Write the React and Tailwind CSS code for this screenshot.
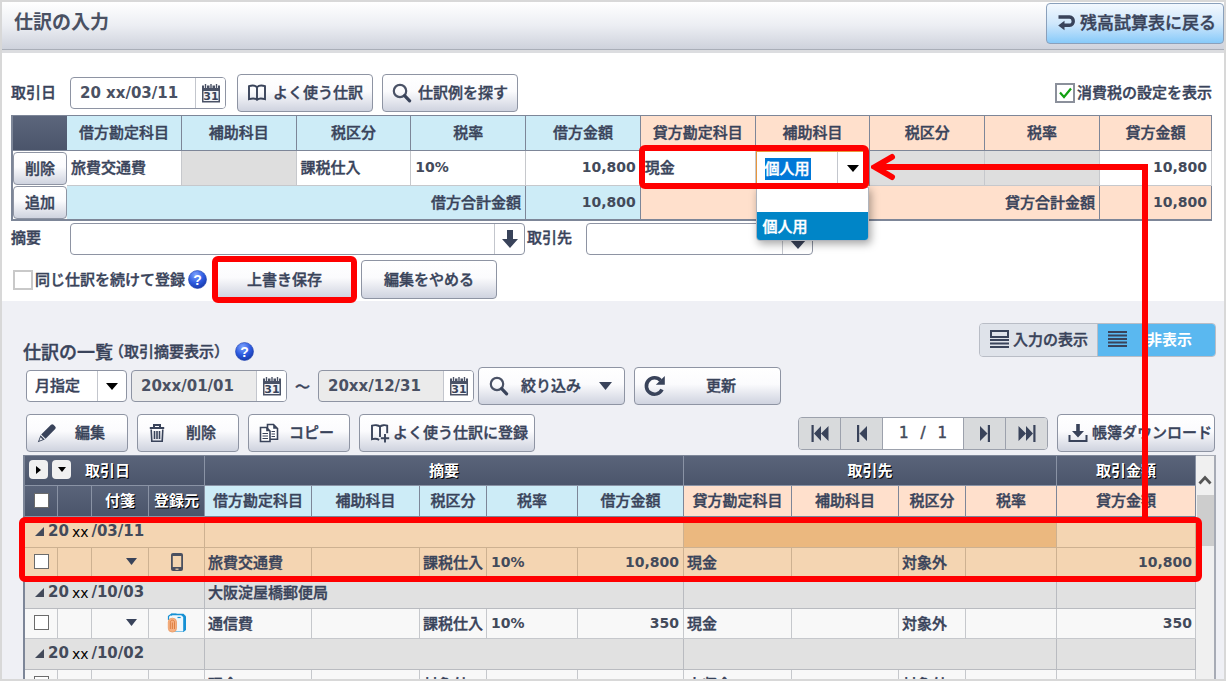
import React from "react";

const BTN =
  "flex items-center rounded border border-[#8e94a3] bg-linear-to-b from-white via-[#fbfbfd] via-45% to-[#cfd3df] pb-0.5 font-medium whitespace-nowrap text-[#39435a] [&>svg]:mt-0.5";
const NUM = "font-['DejaVu_Sans','Noto_Sans_CJK_JP',sans-serif] text-sm font-bold text-[#434a5a] [-webkit-text-stroke:0px]";

function Calendar() {
  return (
    <svg width="20" height="20" viewBox="0 0 20 20" className="[-webkit-text-stroke:0px]" aria-hidden="true">
      <path d="M1 2.500h18v17H1z" fill="#4a5266" />
      <path d="M2.500 8h15v10h-15z" fill="#f2f3f6" />
      <path d="M4.500 0v5M10 0v5M15.500 0v5" stroke="#fff" strokeWidth="3" />
      <path d="M4.500 1v4M10 1v4M15.500 1v4" stroke="#4a5266" strokeWidth="1.400" />
      <text x="10" y="17.200" textAnchor="middle" className="font-['DejaVu_Sans',sans-serif] font-bold" fontSize="11" fill="#39435a">31</text>
    </svg>
  );
}

function Search() {
  return (
    <svg width="20" height="20" viewBox="0 0 20 20" fill="none" aria-hidden="true">
      <circle cx="8" cy="8" r="6.2" stroke="#4a5266" strokeWidth="2.2" />
      <path d="M12.6 12.6 17.6 17.8" stroke="#39435a" strokeWidth="3.2" strokeLinecap="round" />
    </svg>
  );
}

function Book({ plus }) {
  return (
    <svg width="20" height="20" viewBox="0 0 20 20" fill="none" stroke="#39435a" strokeWidth="1.9" aria-hidden="true">
      {plus ? (
        <path d="M10 14V3.6C8.6 2 4.6 1.800 2 2.600v13.600c2.300-.7 5-.6 7.200.6M10 3.600c1.400-1.600 5-1.800 7.200-1v7.600M15 11v8.500M10.800 15.200h8.400" />
      ) : (
        <path d="M10 16.600V4.200C8.400 2.600 4.600 2.400 2 3.200v13c2.600-.8 6.400-.9 8 .6 1.600-1.500 5.400-1.400 8-.6v-13c-2.600-.8-6.400-.6-8 1" />
      )}
    </svg>
  );
}

function Pencil() {
  return (
    <svg width="20" height="20" viewBox="0 0 20 20" fill="#39435a" aria-hidden="true">
      <path d="M14 1.800a1.800 1.800 0 0 1 2.500 0l1.700 1.700a1.800 1.800 0 0 1 0 2.500L8.600 15.800l-4.400-4.400zM3.500 12.200l4.300 4.300L.8 19.200z" />
      <path d="M3.600 14.300 2.300 17.700l3.400-1.300z" fill="#e8eaf0" />
    </svg>
  );
}

function Trash() {
  return (
    <svg width="18" height="20" viewBox="0 0 18 20" fill="none" stroke="#39435a" strokeWidth="1.6" aria-hidden="true">
      <path d="M6 4.500V2h6v2.500M1.800 5h14.400" strokeWidth="2" />
      <path d="M3.200 6.500l.6 11.700h10.400l.6-11.700M6.500 8v8M9 8v8M11.500 8v8" />
    </svg>
  );
}

function Copy() {
  return (
    <svg width="20" height="20" viewBox="0 0 20 20" aria-hidden="true">
      <path d="M8.500 1.500h6l4 4v10.700h-10z" fill="#fff" stroke="#39435a" strokeWidth="1.600" />
      <path d="M14.200 1.500v4.200h4.300z" fill="#39435a" />
      <path d="M1.500 4.500h6l3.500 3.500v10.500H1.500z" fill="#fff" stroke="#39435a" strokeWidth="1.600" />
      <path d="M7.200 4.500v3.800H11z" fill="#39435a" />
      <path d="M3.500 10.500h5.500M3.500 13h5.500M3.500 15.500h5.500M12.500 8.500H16M12.500 11H16M12.500 13.500H16" stroke="#39435a" strokeWidth="1.200" />
    </svg>
  );
}

function Refresh() {
  return (
    <svg width="24" height="24" viewBox="0 0 24 24" fill="none" aria-hidden="true">
      <path d="M19 15.500A8.200 8.200 0 1 1 17.600 6.400" stroke="#39435a" strokeWidth="3.600" />
      <path d="M21.800 2v8.800h-9z" fill="#39435a" />
    </svg>
  );
}

function Download() {
  return (
    <svg width="20" height="20" viewBox="0 0 20 20" aria-hidden="true">
      <path d="M1.500 12v6h17v-6" fill="none" stroke="#39435a" strokeWidth="2" />
      <path d="M8.200 1h3.600v7H16l-6 6.500L4 8h4.200z" fill="#39435a" />
    </svg>
  );
}

function Return() {
  return (
    <svg width="20" height="20" viewBox="0 0 20 20" aria-hidden="true">
      <path d="M1.500 5h11c5 0 5 8.300 0 8.300H6" fill="none" stroke="#39435a" strokeWidth="3.400" />
      <path d="M7.500 8.800v9.400L1.200 13.400z" fill="#39435a" />
    </svg>
  );
}

function Down() {
  return (
    <svg width="12" height="7" viewBox="0 0 12 7" aria-hidden="true"><path d="M0 0h12L6 7z" fill="#000" /></svg>
  );
}

function Help() {
  return (
    <button type="button" aria-label="ヘルプ" className="shrink-0 [-webkit-text-stroke:0px]">
      <svg width="19" height="19" viewBox="0 0 19 19">
        <defs>
          <radialGradient id="help-ball" cx="40%" cy="25%" r="80%">
            <stop offset="0" stopColor="#7fa4ff" />
            <stop offset="0.550" stopColor="#2d5be0" />
            <stop offset="1" stopColor="#1637a6" />
          </radialGradient>
        </defs>
        <circle cx="9.500" cy="9.500" r="9" fill="url(#help-ball)" stroke="#1d3fae" strokeWidth=".6" />
        <text x="9.500" y="14.500" textAnchor="middle" fontSize="14" className="font-['Liberation_Sans',sans-serif] font-bold" fill="#fff">?</text>
      </svg>
    </button>
  );
}

function Skip({ back, double }) {
  return (
    <svg width="20" height="17" viewBox="0 0 20 17" fill="#39435a" aria-hidden="true">
      {back && double && <path d="M1.500 0h2.200v17H1.500zM11 1v15L4 8.500zM18.500 1v15l-7.500-7.500z" />}
      {back && !double && <path d="M5 0h2.200v17H5zM15 1v15L7.500 8.500z" />}
      {!back && !double && <path d="M12.800 0H15v17h-2.200zM5 1v15l7.500-7.500z" />}
      {!back && double && <path d="M16.300 0h2.200v17h-2.200zM9 1v15l7-7.500zM1.500 1v15L9 8.500z" />}
    </svg>
  );
}

function DateBox({ label, value, readOnly }) {
  return (
    <div className={`flex h-8 w-[156px] overflow-hidden rounded border border-[#8e94a3] ${readOnly ? "bg-[#ebebeb]" : "bg-white"}`}>
      <input
        aria-label={label}
        defaultValue={value}
        readOnly={readOnly}
        className="w-0 flex-1 bg-transparent pl-[9px] font-['DejaVu_Sans',sans-serif] text-[15px] font-bold text-[#4a5163] outline-none [-webkit-text-stroke:0px]"
      />
      <button type="button" aria-label="カレンダー" className="flex w-[30px] items-center justify-center border-l border-[#c3c6cd] bg-white">
        <Calendar />
      </button>
    </div>
  );
}

function Tick({ id, checked, className }) {
  return (
    <span className="relative flex shrink-0">
      <input id={id} type="checkbox" defaultChecked={checked} className={`peer appearance-none bg-white ${className}`} />
      <svg viewBox="0 0 20 20" className="pointer-events-none absolute inset-0 hidden h-full w-full peer-checked:block">
        <path d="M5 9.500l4 4.500 7-8.500" fill="none" stroke="#12a012" strokeWidth="2.200" />
      </svg>
    </span>
  );
}

const ROW_TICK = "h-[15px] w-[15px] border border-[#6b6b6b]";
const HEAD = "border-b border-r border-[#7d8698] p-0 pb-0.5 text-center font-medium";
const CELL = "border-b border-r border-[#c6c8cc] pb-0.5";

function EntryTable() {
  const names = ["勘定科目", "補助科目", "税区分", "税率", "金額"];
  const title = (side, n) => (n === "勘定科目" || n === "金額" ? side + n : n);
  const total = "border-r border-b-2 border-[#7d8698] pr-1 pb-0.5 text-right";
  return (
    <table className="mt-[3px] w-full table-fixed border-separate border-spacing-0 border-l-2 border-t border-[#7d8698]">
      <colgroup>
        <col className="w-[54px]" />
        {Array.from({ length: 9 }, (_, i) => <col key={i} />)}
        <col className="w-[112px]" />
      </colgroup>
      <thead>
        <tr className="h-[35px]">
          <th className="border-b border-[#7d8698] bg-linear-to-b from-[#5c667c] to-[#4b556b]" aria-label="操作" />
          {names.map((n) => <th key={n} className={`${HEAD} bg-[#cdecf7]`}>{title("借方", n)}</th>)}
          {names.map((n) => <th key={n} className={`${HEAD} bg-[#ffe0cc]`}>{title("貸方", n)}</th>)}
        </tr>
      </thead>
      <tbody>
        <tr className="h-[35px] bg-white">
          <td className="p-0"><button type="button" className={`${BTN} h-[33px] w-[54px] justify-center`}>削除</button></td>
          <td className={`${CELL} pl-1`}>旅費交通費</td>
          <td className={`${CELL} bg-[#dedede]`} />
          <td className={`${CELL} pl-1`}>課税仕入</td>
          <td className={`${CELL} pl-1 ${NUM}`}>10%</td>
          <td className={`${CELL} pr-1 text-right ${NUM}`}>10,800</td>
          <td className={`${CELL} relative pl-1`}>
            現金
            <span className="pointer-events-none absolute -top-1.5 -left-0.5 z-20 h-[44px] w-[calc(200%+3px)] rounded-md border-6 border-[#ff0000]" />
          </td>
          <td className="relative border-r border-[#7d8698] p-0">
            <div className="flex h-[35px] items-center border border-[#e8963c]">
              <div className="flex-1 pl-2">
                <input aria-label="補助科目" defaultValue="個人用" className="h-[22px] w-[46px] bg-[#0078d7] pb-0.5 text-white outline-none" />
              </div>
              <button type="button" aria-label="候補を開く" className="flex h-full w-[31px] items-center justify-center border-l border-[#c3c6cd]"><Down /></button>
            </div>
            <ul role="listbox" className="absolute top-[36px] left-0 z-10 w-full overflow-hidden rounded-b border border-[#b0b4bc] bg-white shadow-[2px_3px_8px_rgba(0,0,0,0.350)]">
              <li role="option" aria-selected="false" className="h-6" />
              <li role="option" aria-selected="true" className="flex h-7 items-center bg-[#0085c7] pl-1.5 text-white">個人用</li>
            </ul>
          </td>
          <td className={`${CELL} bg-[#dedede]`} />
          <td className={`${CELL} bg-[#dedede]`} />
          <td className={`${CELL} pr-1 text-right ${NUM}`}>10,800</td>
        </tr>
        <tr className="h-[35px]">
          <td className="border-b-2 border-[#7d8698] bg-white p-0"><button type="button" className={`${BTN} h-[33px] w-[54px] justify-center`}>追加</button></td>
          <td colSpan={4} className={`${total} bg-[#cdecf7]`}>借方合計金額</td>
          <td className={`${total} bg-[#cdecf7] ${NUM}`}>10,800</td>
          <td colSpan={4} className={`${total} bg-[#ffe0cc]`}>貸方合計金額</td>
          <td className={`${total} bg-[#ffe0cc] ${NUM}`}>10,800</td>
        </tr>
      </tbody>
    </table>
  );
}

const entries = [
  { date: "/03/11", memo: "", source: "phone", debit: "旅費交通費", tax: "課税仕入", rate: "10%", amount: "10,800", credit: "現金", creditTax: "対象外", active: true },
  { date: "/10/03", memo: "大阪淀屋橋郵便局", source: "card", debit: "通信費", tax: "課税仕入", rate: "10%", amount: "350", credit: "現金", creditTax: "対象外" },
  { date: "/10/02", memo: "", source: "", debit: "現金", tax: "対象外", rate: "", amount: "10,100", credit: "未収金", creditTax: "対象外" },
];

function Source({ kind }) {
  if (kind === "phone")
    return (
      <svg width="14" height="20" viewBox="0 0 14 20" className="mx-auto" role="img" aria-label="スマートフォン">
        <rect x="1" y="1" width="12" height="18" rx="2" fill="#4a5060" />
        <rect x="2.800" y="4" width="8.400" height="11" fill="#f4d5b0" />
        <path d="M5.500 17.200h3" stroke="#f4d5b0" strokeWidth="1.200" />
      </svg>
    );
  if (kind === "card")
    return (
      <svg width="20" height="20" viewBox="0 0 20 20" className="mx-auto" role="img" aria-label="明細">
        <path d="M4 .8h12.500l2.500 2.500V17l-2.500 2H4z" fill="#1590d4" />
        <path d="M2.500 3.500 5.500 2.200h8.700l2 1.800v14.500H2.500z" fill="#eef7fc" />
        <path d="M1.500 7V3.200L4.500 1.200h5" fill="none" stroke="#1590d4" strokeWidth="1.200" />
        <path d="M10.500 4.500h3.200" stroke="#1590d4" strokeWidth="1.200" />
        <rect x="1.300" y="5.200" width="8.200" height="13.800" rx="3.800" fill="#f5b184" stroke="#ee9a62" strokeWidth=".8" />
        <path d="M3.300 16V9.200c0-2.800 4.200-2.800 4.200 0V16M5.400 9.500V16" fill="none" stroke="#d9793a" strokeWidth=".9" />
      </svg>
    );
  return null;
}

function ListTable() {
  const dark = "border-r border-b border-[#8a93a5] bg-linear-to-b from-[#5a647a] to-[#4b556b] p-0 pb-0.5 text-center font-bold text-white [text-shadow:1px_1px_0_#000] [-webkit-text-stroke:0px]";
  return (
    <table className="w-full table-fixed border-separate border-spacing-0 border-t border-l-2 border-[#7d8698]">
      <colgroup>
        <col className="w-[33px]" /><col className="w-[34px]" /><col className="w-[57px]" /><col className="w-[56px]" />
        <col className="w-[107px]" /><col className="w-[108px]" /><col className="w-[67px]" /><col className="w-[91px]" /><col className="w-[106px]" />
        <col className="w-[108px]" /><col className="w-[107px]" /><col className="w-[67px]" /><col className="w-[91px]" /><col />
      </colgroup>
      <thead>
        <tr className="h-[30px]">
          <th colSpan={4} className={dark}>
            <div className="flex items-center gap-1 pl-1">
              <button type="button" aria-label="すべて閉じる" className="flex h-[19px] w-[19px] items-center justify-center rounded-sm bg-[#f0f0f0]">
                <svg width="5" height="8" viewBox="0 0 5 8"><path d="M0 0v8l5-4z" /></svg>
              </button>
              <button type="button" aria-label="すべて開く" className="flex h-[19px] w-[19px] items-center justify-center rounded-sm bg-[#f0f0f0]">
                <svg width="8" height="5" viewBox="0 0 8 5"><path d="M0 0h8L4 5z" /></svg>
              </button>
              <span className="pl-2.5">取引日</span>
            </div>
          </th>
          <th colSpan={5} className={dark}>摘要</th>
          <th colSpan={4} className={dark}>取引先</th>
          <th className={dark}>取引金額</th>
        </tr>
        <tr className="h-[31px]">
          <th className={dark}><input type="checkbox" aria-label="すべて選択" className={`mx-auto block appearance-none bg-white ${ROW_TICK}`} /></th>
          <th className={dark} aria-label="番号" />
          <th className={dark}>付箋</th>
          <th className={dark}>登録元</th>
          {["借方勘定科目", "補助科目", "税区分", "税率", "借方金額"].map((n) => <th key={n} className={`${HEAD} bg-[#cdecf7]`}>{n}</th>)}
          {["貸方勘定科目", "補助科目", "税区分", "税率", "貸方金額"].map((n) => <th key={n} className={`${HEAD} bg-[#ffe0cc]`}>{n}</th>)}
        </tr>
      </thead>
      {entries.map((e) => {
        const c = `border-b border-r p-0 pb-0.5 ${e.active ? "border-[#cdb191] bg-[#f4d5b2]" : "border-[#c6c8cc] bg-[#f8f8f8]"}`;
        const g = `border-b border-r p-0 pb-0.5 ${e.active ? "border-[#cdb191] bg-[#f4d5b2]" : "border-[#b9bbc0] bg-[#e1e1e1]"}`;
        return (
          <tbody key={e.date} className={e.active ? "relative" : ""}>
            <tr className="h-[31px]">
              <td colSpan={4} className={g}>
                <div className={`flex items-center pt-0.5 ${NUM} text-[15px]`}>
                  <svg width="9" height="9" viewBox="0 0 9 9" className="mr-1 ml-2.5" fill="#434a5a"><path d="M9 0v9H0z" /></svg>
                  20<span className="px-[3px] font-['DejaVu_Sans'] text-sm font-normal text-black">xx</span>{e.date}
                </div>
              </td>
              <td colSpan={5} className={`${g} pl-[3px]`}>{e.memo}</td>
              <td colSpan={4} className={e.active ? "border-r border-b border-[#cdb191] bg-[#ebb87f]" : g} />
              <td className={g}>
                {e.active && <span className="pointer-events-none absolute -right-1.5 -left-1.5 top-0 z-10 block h-[65px] rounded-md border-6 border-[#ff0000]" />}
              </td>
            </tr>
            <tr className="h-[30px]">
              <td className={c}><input type="checkbox" aria-label={`${e.debit}を選択`} className={`mx-auto block appearance-none bg-white ${ROW_TICK}`} /></td>
              <td className={c} />
              <td className={c}>
                <button type="button" aria-label="付箋" className="ml-[34px] flex h-5 items-center"><svg width="11" height="7" viewBox="0 0 11 7" fill="#39435a"><path d="M0 0h11L5.500 7z" /></svg></button>
              </td>
              <td className={c}><Source kind={e.source} /></td>
              <td className={`${c} pl-[3px]`}>{e.debit}</td>
              <td className={c} />
              <td className={`${c} pl-[3px] whitespace-nowrap`}>{e.tax}</td>
              <td className={`${c} pl-1 ${NUM}`}>{e.rate}</td>
              <td className={`${c} pr-1 text-right ${NUM}`}>{e.amount}</td>
              <td className={`${c} pl-[3px]`}>{e.credit}</td>
              <td className={c} />
              <td className={`${c} pl-[3px]`}>{e.creditTax}</td>
              <td className={c} />
              <td className={`${c} pr-[3px] text-right ${NUM}`}>{e.amount}</td>
            </tr>
          </tbody>
        );
      })}
    </table>
  );
}

function Pager() {
  const b = "flex w-[42px] items-center justify-center border-[#9ca1ac] bg-[#d8dadc]";
  return (
    <nav aria-label="ページ" className="flex h-[33px] overflow-hidden rounded border border-[#9ca1ac]">
      <button type="button" aria-label="最初" className={`${b} border-r`}><Skip back double /></button>
      <button type="button" aria-label="前へ" className={`${b} border-r`}><Skip back /></button>
      <span className="flex w-20 items-center justify-center gap-3 bg-white font-['DejaVu_Sans',sans-serif] text-[15px] text-[#434a5a] [-webkit-text-stroke:0.5px]">
        <span>1</span><span>/</span><span>1</span>
      </span>
      <button type="button" aria-label="次へ" className={`${b} border-l`}><Skip /></button>
      <button type="button" aria-label="最後" className={`${b} border-l`}><Skip double /></button>
    </nav>
  );
}

export default function App() {
  return (
    <div className="relative flex h-screen flex-col overflow-hidden border-2 border-[#d8d8d8] bg-[#eff0f5] font-['Noto_Sans_CJK_JP',sans-serif] text-[15px] leading-5 font-medium text-[#39435a] [-webkit-text-stroke:0.4px]">
      <header className="flex h-12 shrink-0 items-start justify-between border-b border-[#a9aeb8] bg-linear-to-b from-white via-[#eceef3] via-50% to-[#ced2dc] pl-3">
        <h1 className="mt-[7px] text-[19px] leading-6 font-bold text-[#4a5163] [-webkit-text-stroke:0px]">仕訳の入力</h1>
        <a href="#balance" className="mt-px flex h-[41px] items-center gap-[3px] rounded border border-[#8aa0bb] bg-linear-to-b from-[#f2f8fe] via-[#cfe7fb] to-[#86caf9] pr-[7px] pb-1 pl-2.5 text-[17px] whitespace-nowrap">
          <Return />残高試算表に戻る
        </a>
      </header>

      <section aria-label="仕訳の入力" className="shrink-0 border-t-[3px] border-[#dcdde0] bg-white pt-[21px] pr-3 pb-0.5 pl-[9px]">
        <div className="flex h-[38px] items-center">
          <span className="w-[59px] pb-0.5">取引日</span>
          <DateBox label="取引日" value="20 xx/03/11" />
          <button type="button" className={`${BTN} ml-[11px] h-[38px] gap-1.5 px-[9px]`}><Book />よく使う仕訳</button>
          <button type="button" className={`${BTN} ml-[9px] h-[38px] gap-1.5 px-[9px]`}><Search />仕訳例を探す</button>
          <label htmlFor="show-tax" className="ml-auto flex items-center gap-0.5">
            <Tick id="show-tax" checked className="h-5 w-5 border-2 border-[#8b909b]" /><span className="pb-0.5">消費税の設定を表示</span>
          </label>
        </div>

        <EntryTable />

        <div className="mt-0.5 flex h-8 items-center">
          <label htmlFor="memo" className="w-[59px] pb-1">摘要</label>
          <div className="flex h-8 w-[455px] rounded border border-[#8e94a3] bg-white">
            <input id="memo" className="w-0 flex-1 px-2 outline-none" />
            <button type="button" aria-label="候補" className="flex w-[30px] items-center justify-center border-l border-[#c3c6cd]">
              <svg width="16" height="18" viewBox="0 0 16 18" fill="#39435a"><path d="M5 0h6v9h5l-8 9-8-9h5z" /></svg>
            </button>
          </div>
          <label htmlFor="partner" className="w-[61px] pb-1 pl-0.5">取引先</label>
          <div className="flex h-8 w-[227px] rounded border border-[#8e94a3] bg-white">
            <input id="partner" className="w-0 flex-1 px-2 outline-none" />
            <button type="button" aria-label="候補を開く" className="flex w-[30px] items-center justify-center border-l border-[#c3c6cd] pt-2.5">
              <svg width="16" height="9" viewBox="0 0 16 9" fill="#39435a"><path d="M0 0h16L8 9z" /></svg>
            </button>
          </div>
        </div>

        <div className="mt-[5px] flex h-[39px] items-center">
          <label htmlFor="again" className="flex items-center gap-0.5 pl-0.5">
            <Tick id="again" className="h-5 w-5 border-2 border-[#c9c9c9]" /><span className="pb-0.5">同じ仕訳を続けて登録</span>
          </label>
          <span className="ml-[3px] flex"><Help /></span>
          <div className="relative ml-[9px]">
            <button type="button" className={`${BTN} h-[39px] w-[137px] justify-center`}>上書き保存</button>
            <span className="pointer-events-none absolute -inset-1 rounded-md border-6 border-[#ff0000]" />
          </div>
          <button type="button" className={`${BTN} ml-2 h-[39px] w-[136px] justify-center`}>編集をやめる</button>
        </div>
      </section>

      <section aria-label="仕訳の一覧" className="flex min-h-0 flex-1 flex-col pt-[22px] pr-2 pl-[21px]">
        <div className="flex h-[34px] shrink-0 items-center justify-between">
          <h2 className="flex items-center pt-[22px] text-[18px]">
            仕訳の一覧<span className="-ml-1 text-[15px]">（取引摘要表示）</span>
            <span className="ml-1.5 flex"><Help /></span>
          </h2>
          <div className="flex h-[34px] overflow-hidden rounded border border-[#b9bdc6]">
            <button type="button" className="flex w-[118px] items-center gap-1 border-r border-[#b9bdc6] bg-[#dfe3ea] pb-0.5 pl-2.5 whitespace-nowrap">
              <svg width="19" height="20" viewBox="0 0 19 20" stroke="#39435a" fill="none"><rect x="1" y="2" width="17" height="6" strokeWidth="2" /><path d="M0 11h19M0 14.500h19M0 18h19" strokeWidth="1.800" /></svg>
              入力の表示
            </button>
            <button type="button" className="flex w-[117px] items-center bg-[#5ab8f0] pb-0.5 pl-2.5 text-white">
              <svg width="19" height="18" viewBox="0 0 19 18" stroke="#39435a"><path d="M0 2h19M0 5.500h19M0 9h19M0 12.500h19M0 16h19" strokeWidth="2" /></svg>
              <span className="ml-5 font-bold [-webkit-text-stroke:0px]">非表示</span>
            </button>
          </div>
        </div>

        <div className="mt-2.5 flex h-[38px] shrink-0 items-center pl-[3px]">
          <div className="relative h-8 w-[101px]">
            <select aria-label="期間" className="h-8 w-full appearance-none rounded border border-[#8e94a3] bg-white pb-0.5 pl-2 font-medium">
              <option>月指定</option>
            </select>
            <span className="pointer-events-none absolute inset-y-px right-px flex w-[29px] items-center justify-center border-l border-[#c3c6cd]"><Down /></span>
          </div>
          <span className="ml-1 flex"><DateBox label="開始日" value="20xx/01/01" readOnly /></span>
          <span className="w-[31px] text-center">～</span>
          <DateBox label="終了日" value="20xx/12/31" readOnly />
          <button type="button" className={`${BTN} ml-1 h-[38px] w-[147px] pl-2.5`}>
            <Search /><span className="ml-3 flex-1 text-left">絞り込み</span>
            <svg width="13" height="8" viewBox="0 0 13 8" className="mr-3" fill="#39435a"><path d="M0 0h13L6.500 8z" /></svg>
          </button>
          <button type="button" className={`${BTN} ml-[9px] h-[38px] w-[147px] pl-2`}><Refresh /><span className="ml-[39px]">更新</span></button>
        </div>

        <div className="mt-[9px] flex h-[38px] shrink-0 items-center gap-[9px] pr-px pl-[3px]">
          <button type="button" className={`${BTN} h-[38px] w-[102px] pl-2.5`}><Pencil /><span className="ml-[18px]">編集</span></button>
          <button type="button" className={`${BTN} h-[38px] w-[102px] pl-2.5`}><Trash /><span className="ml-5">削除</span></button>
          <button type="button" className={`${BTN} h-[38px] w-[102px] pl-2.5`}><Copy /><span className="ml-2.5">コピー</span></button>
          <button type="button" className={`${BTN} h-[38px] w-[176px] gap-[3px] pl-2.5`}><Book plus />よく使う仕訳に登録</button>
          <div className="ml-auto"><Pager /></div>
          <button type="button" className={`${BTN} h-[38px] w-[158px] gap-1 pl-2.5`}><Download />帳簿ダウンロード</button>
        </div>

        <div className="mt-[3px] flex min-h-0 flex-1">
          <div className="min-w-0 flex-1"><ListTable /></div>
          <div className="flex w-5 flex-col items-center border-t border-r-2 border-[#a7abb5] bg-[#f0f0f0]" aria-hidden="true">
            <svg width="14" height="10" viewBox="0 0 14 10" className="mt-[19px]"><path d="M1.500 8.500 7 2.500l5.500 6" fill="none" stroke="#555" strokeWidth="2.800" /></svg>
            <div className="mt-2.5 h-[51px] w-[17px] bg-[#cdcdcd]" />
          </div>
        </div>
      </section>

      <svg className="pointer-events-none absolute top-[151px] right-[75px] z-30" width="278" height="368" viewBox="0 0 278 368" fill="none" stroke="#ff0000" aria-hidden="true">
        <path d="M4 14H274V368" strokeWidth="6" />
        <path d="M21 4 4 14l17 10" strokeWidth="6" strokeLinecap="round" />
      </svg>
    </div>
  );
}
